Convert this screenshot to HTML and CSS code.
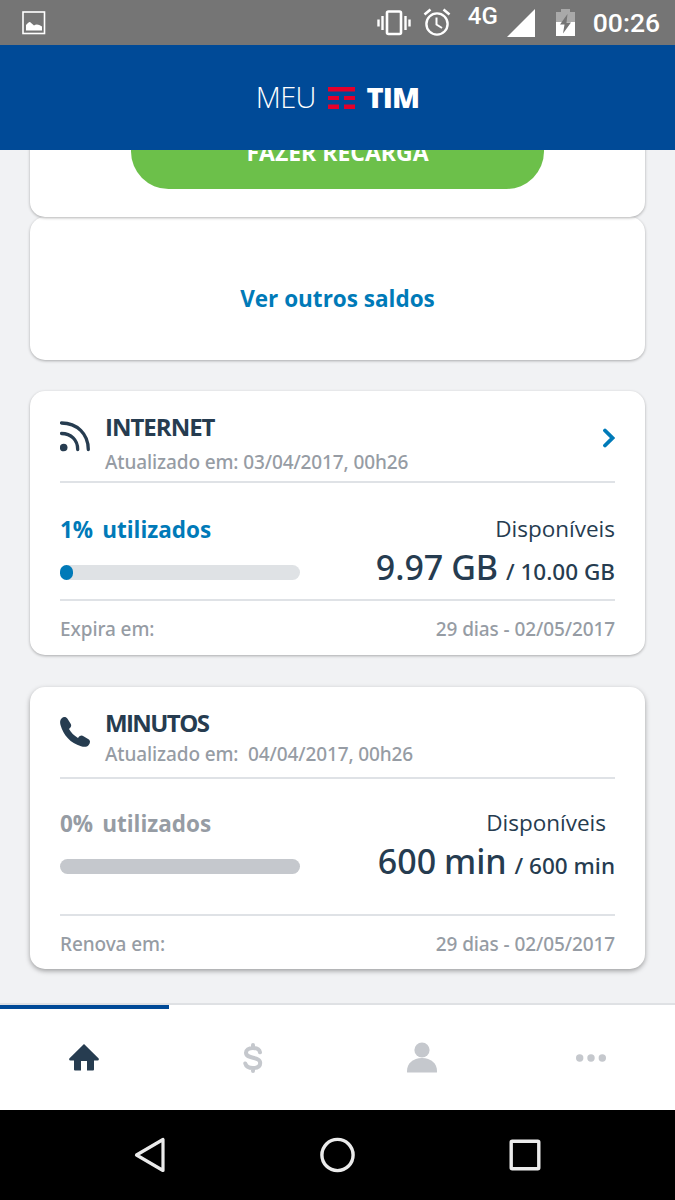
FILE: index.html
```html
<!DOCTYPE html>
<html lang="pt-BR">
<head>
    <meta charset="UTF-8">
    <meta name="viewport" content="width=device-width, initial-scale=1.0">
    <title>Meu TIM</title>
    <link rel="stylesheet" href="styles.css">
</head>
<body>
    <div class="phone">
        <div class="status-bar">
            <svg class="status-picture" width="24" height="24" viewBox="0 0 24 24">
                <rect x="1" y="1" width="21.5" height="21.5" fill="none" stroke="#fff" stroke-width="1.6"/>
                <path d="M4 19.5V14Q7 10.500 8 11L12 14.500Q15 12 20 15.500V19.500z" fill="#fff"/>
            </svg>
            <div class="status-icons">
                <svg class="status-vibrate" width="36" height="28" viewBox="0 0 36 28">
                    <rect x="11" y="2.5" width="14" height="22.500" rx="1.5" fill="none" stroke="#fff" stroke-width="2.6"/>
                    <path d="M6.500 7v14M29.500 7v14M2.500 10.500v7M33.500 10.500v7" stroke="#fff" stroke-width="2.4"/>
                </svg>
                <svg class="status-alarm" width="28" height="28" viewBox="0 0 28 28">
                    <circle cx="14" cy="16" r="10.600" fill="none" stroke="#fff" stroke-width="2.4"/>
                    <path d="M13.500 9.500v7l5.500 3.500" fill="none" stroke="#fff" stroke-width="2"/>
                    <path d="M1.500 6.500L7.500 1.500M26.500 6.500L20.500 1.500" stroke="#fff" stroke-width="2.6"/>
                </svg>
                <span class="network">4G</span>
                <svg class="status-signal" width="28" height="28" viewBox="0 0 28 28">
                    <path d="M0 28L28 0v28z" fill="#fff"/>
                </svg>
                <svg class="status-battery" width="19" height="28" viewBox="0 0 19 28">
                    <path d="M0 3h5V0h9v3h5v11H0z" fill="#a9a9a9"/>
                    <path d="M0 13h19v14H0z" fill="#fff"/>
                    <path d="M11.500 5L4 15.500h4.500L7 24.500l8-11h-4.500z" fill="#757575"/>
                </svg>
                <span class="clock">00:26</span>
            </div>
        </div>

        <header class="app-header">
            <span class="logo-meu">MEU</span>
            <svg class="logo-mark" width="27" height="22" viewBox="0 0 27 22">
                <path d="M0 0h27v4.500H0zM0 9h11v4H0zM16 9h11v4H16zM0 17.500h11V22H0zM16 17.500h11V22H16z" fill="#e4002b"/>
            </svg>
            <span class="logo-tim">TIM</span>
        </header>

        <main class="content">
            <section class="card card-recharge">
                <button class="btn-recharge">FAZER RECARGA</button>
            </section>

            <section class="card card-balances">
                <a class="link-balances">Ver outros saldos</a>
            </section>

            <section class="card card-internet">
                <div class="card-header">
                    <svg class="card-icon" width="30" height="31" viewBox="0 0 30 31">
                        <circle cx="3.7" cy="26.5" r="3.8" fill="#263c50"/>
                        <path d="M1.500 12.500C11 12.500 17.700 19 17.700 28.500M1.500 2C17 2 28.300 13 28.300 28.500" fill="none" stroke="#263c50" stroke-width="3.3" stroke-linecap="round"/>
                    </svg>
                    <div class="card-heading">
                        <h2>INTERNET</h2>
                        <p>Atualizado em: 03/04/2017, 00h26</p>
                    </div>
                    <svg class="card-arrow" width="12" height="20" viewBox="0 0 12 20">
                        <path d="M2 2.500L9.500 10L2 17.500" fill="none" stroke="#007ab8" stroke-width="3.8" stroke-linecap="round"/>
                    </svg>
                </div>
                <div class="card-body">
                    <div class="usage">
                        <p class="usage-label"><span>1%</span> <span>utilizados</span></p>
                        <div class="bar"><div class="bar-fill" style="width: 13px"></div></div>
                    </div>
                    <div class="available">
                        <p class="available-label">Disponíveis</p>
                        <p class="available-value">9.97 GB <small>/ 10.00 GB</small></p>
                    </div>
                </div>
                <div class="card-footer">
                    <span>Expira em:</span>
                    <span>29 dias - 02/05/2017</span>
                </div>
            </section>

            <section class="card card-minutes">
                <div class="card-header">
                    <svg class="card-icon" width="30" height="30" viewBox="0 0 30 30">
                        <path d="M1.500 1.500C3.500-.5 6-.3 7.500 1.700L10.500 6.500C11.800 8.700 11.200 10 9 12C11 15.500 14 18.700 18 21C20 18.500 21.500 18 23.500 19.200L28.500 22.200C30.500 23.500 30.500 26 28.500 28.200C27 30 24.500 30.300 21 29.300C10.500 26 3.500 18.500.5 8C-.2 5.500 0 3 1.500 1.500z" fill="#263c50"/>
                    </svg>
                    <div class="card-heading">
                        <h2>MINUTOS</h2>
                        <p>Atualizado em: &nbsp;04/04/2017, 00h26</p>
                    </div>
                </div>
                <div class="card-body">
                    <div class="usage">
                        <p class="usage-label"><span>0%</span> <span>utilizados</span></p>
                        <div class="bar"></div>
                    </div>
                    <div class="available">
                        <p class="available-label">Disponíveis</p>
                        <p class="available-value">600 min <small>/ 600 min</small></p>
                    </div>
                </div>
                <div class="card-footer">
                    <span>Renova em:</span>
                    <span>29 dias - 02/05/2017</span>
                </div>
            </section>
        </main>

        <nav class="tabs">
            <a class="tab active">
                <svg width="30" height="27" viewBox="0 0 30 27">
                    <path d="M15 0L29.700 14.500Q30.300 16.500 28.500 16.500H25V25.500Q25 26.500 24 26.500H18V17H12V26.500H6Q5 26.500 5 25.500V16.500H1.500Q-.3 16.500.3 14.500z" fill="#263c50"/>
                </svg>
            </a>
            <a class="tab">
                <svg width="20" height="30" viewBox="0 0 20 30">
                    <path d="M17 9.300C16.500 6.500 14 5 10 5C5.500 5 3 7 3 9.800C3 16.500 17.200 13 17.200 20C17.200 23.200 14.500 25 10 25C5.500 25 3 23.200 2.300 20.500M10 2V4M10 26V28" fill="none" stroke="#c5c8cd" stroke-width="4" stroke-linecap="round"/>
                </svg>
            </a>
            <a class="tab">
                <svg width="30" height="31" viewBox="0 0 30 31">
                    <circle cx="15" cy="8" r="7.6" fill="#c5c8cd"/>
                    <path d="M0 30V29C0 21.500 6 16 15 16S30 21.500 30 29V30Q30 30.500 29.500 30.500H.5Q0 30.500 0 30z" fill="#c5c8cd"/>
                </svg>
            </a>
            <a class="tab">
                <svg width="30" height="8" viewBox="0 0 30 8">
                    <circle cx="3.7" cy="4" r="3.7" fill="#c5c8cd"/>
                    <circle cx="15" cy="4" r="3.7" fill="#c5c8cd"/>
                    <circle cx="26.3" cy="4" r="3.7" fill="#c5c8cd"/>
                </svg>
            </a>
        </nav>

        <div class="android-nav">
            <svg width="36" height="36" viewBox="0 0 36 36">
                <path d="M31 2.500V33.500L4.500 18z" fill="none" stroke="#ebebeb" stroke-width="3.2" stroke-linejoin="round"/>
            </svg>
            <svg width="36" height="36" viewBox="0 0 36 36">
                <circle cx="17.5" cy="18" r="15.6" fill="none" stroke="#ebebeb" stroke-width="3.4"/>
            </svg>
            <svg width="36" height="36" viewBox="0 0 36 36">
                <rect x="4.2" y="4.2" width="27.6" height="27.6" rx="1" fill="none" stroke="#ebebeb" stroke-width="3.4"/>
            </svg>
        </div>
    </div>
</body>
</html>
```
FILE: styles.css
```css
* {
    box-sizing: border-box;
}

body {
    margin: 0;
    font-family: "Open Sans", sans-serif;
    color: #263c50;
    background-color: #f1f2f4;
}

h2, p {
    margin: 0;
}

svg {
    display: block;
    flex: none;
}

.phone {
    display: flex;
    flex-direction: column;
    width: 675px;
    height: 1200px;
    overflow: hidden;
}

/* Status bar */
.status-bar {
    display: flex;
    justify-content: space-between;
    flex: none;
    height: 45px;
    padding: 0 15px 0 22px;
    background-color: #757575;
    color: #fff;
    font-family: Roboto, sans-serif;
}

.status-picture {
    margin-top: 11px;
}

.status-icons {
    display: flex;
}

.status-vibrate {
    margin: 9px 11px 0 0;
}

.status-alarm {
    margin: 8px 17px 0 0;
}

.network {
    width: 32px;
    margin-right: 7px;
    font-size: 24px;
    font-weight: 500;
    line-height: 33px;
}

.status-signal {
    margin: 9px 21px 0 0;
}

.status-battery {
    margin: 9px 18px 0 0;
}

.clock {
    font-size: 26.5px;
    font-weight: 500;
    line-height: 46px;
}

/* App header */
.app-header {
    display: flex;
    align-items: center;
    justify-content: center;
    flex: none;
    height: 105px;
    background-color: #004a97;
    color: #fff;
    font-size: 29px;
    line-height: 40px;
}

.logo-meu {
    margin-top: -2px;
    font-weight: 300;
    letter-spacing: -0.7px;
}

.logo-mark {
    margin: 0 12px;
}

.logo-tim {
    margin-top: -2px;
    font-weight: 800;
    letter-spacing: -0.9px;
}

/* Cards */
.content {
    flex: none;
    height: 853px;
    padding: 0 30px;
    overflow: hidden;
}

.card {
    padding: 0 30px;
    border-radius: 15px;
    background-color: #fff;
    box-shadow: 0 1px 3px rgba(0, 0, 0, 0.3);
}

/* keeps its shadow above the next card */
.card-recharge {
    position: relative;
    height: 127px;
    margin-top: -60px;
    padding-top: 24px;
}

.btn-recharge {
    display: block;
    width: 413px;
    height: 75px;
    margin: 0 auto;
    padding: 0;
    border: 0;
    border-radius: 38px;
    background-color: #6cc04a;
    color: #fff;
    font-family: inherit;
    font-size: 23px;
    font-weight: 700;
}

.card-balances {
    height: 143px;
    padding-top: 67px;
    text-align: center;
}

.link-balances {
    display: block;
    color: #007ab8;
    font-size: 22.5px;
    font-weight: 700;
    line-height: 30px;
}

.card-internet {
    height: 264px;
    margin-top: 31px;
}

.card-minutes {
    height: 282px;
    margin-top: 32px;
    box-shadow: 0 2px 5px rgba(0, 0, 0, 0.35);
}

.card-header {
    display: flex;
    height: 92px;
    border-bottom: 2px solid #dfe2e6;
}

.card-icon {
    margin: 30px 15px 0 0;
}

.card-heading {
    flex: 1;
    padding-top: 22px;
}

.card-heading h2 {
    font-size: 24px;
    font-weight: 700;
    line-height: 28px;
    letter-spacing: -1px;
}

.card-heading p {
    margin-top: 9px;
    color: #969ca4;
    font-family: "Noto Sans", sans-serif;
    font-size: 19px;
    font-weight: 500;
    line-height: 24px;
    letter-spacing: -0.12px;
}

.card-minutes .card-heading h2 {
    letter-spacing: -1.6px;
}

.card-minutes .card-heading p {
    margin-top: 5px;
}

.card-arrow {
    margin-top: 37px;
}

.card-body {
    display: flex;
    justify-content: space-between;
    height: 118px;
    padding-top: 31px;
    border-bottom: 2px solid #dfe2e6;
}

.usage-label {
    display: flex;
    gap: 9px;
    padding-top: 1px;
    color: #007ab8;
    font-size: 22.5px;
    font-weight: 700;
    line-height: 30px;
}

.bar {
    width: 240px;
    height: 15px;
    margin-top: 20px;
    border-radius: 8px;
    background-color: #dfe2e5;
}

.bar-fill {
    height: 15px;
    border-radius: 7px;
    background-color: #007ab8;
}

.available {
    text-align: right;
}

.available-label {
    font-size: 22.5px;
    line-height: 30px;
}

.available-value {
    margin-top: 3px;
    font-family: "Noto Sans", sans-serif;
    font-size: 34px;
    font-weight: 500;
    line-height: 40px;
    word-spacing: -1px;
}

.available-value small {
    font-size: 22.5px;
    word-spacing: 0;
}

.card-minutes .card-body {
    height: 137px;
    padding-top: 29px;
}

.card-minutes .usage-label {
    color: #969ca4;
}

.card-minutes .bar {
    background-color: #c5c8cd;
}

.card-minutes .available-label {
    padding-right: 9px;
}

.card-footer {
    display: flex;
    justify-content: space-between;
    color: #969ca4;
    font-family: "Noto Sans", sans-serif;
    font-size: 19px;
    font-weight: 500;
    line-height: 56px;
    letter-spacing: -0.1px;
}

/* Bottom tabs */
.tabs {
    display: flex;
    flex: none;
    height: 107px;
    border-top: 2px solid #dfe1e4;
    background-color: #fff;
}

.tab {
    display: flex;
    align-items: center;
    justify-content: center;
    flex: 1;
}

.tab.active {
    padding-bottom: 4px;
    border-top: 4px solid #004a97;
}

/* Android buttons */
.android-nav {
    display: flex;
    align-items: center;
    justify-content: space-between;
    flex: none;
    height: 90px;
    padding: 0 132px;
    background-color: #000;
}
```
